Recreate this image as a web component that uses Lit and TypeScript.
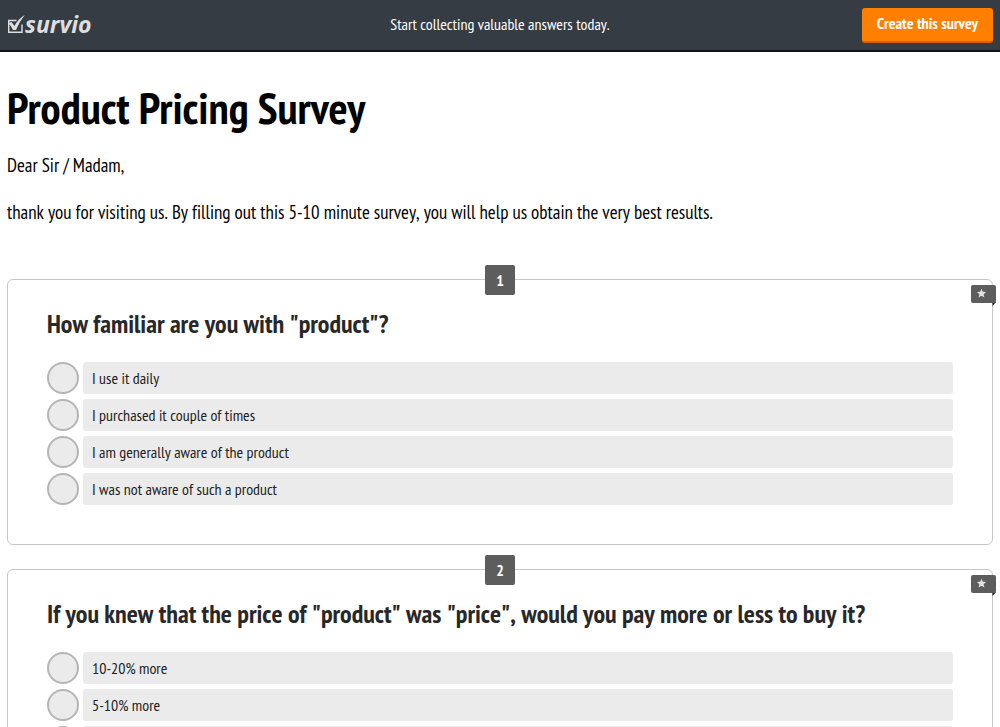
import { LitElement, html, css } from "lit";
import { customElement, property } from "lit/decorators.js";

const questions = [
  {
    title: 'How familiar are you with "product"?',
    answers: [
      "I use it daily",
      "I purchased it couple of times",
      "I am generally aware of the product",
      "I was not aware of such a product",
    ],
  },
  {
    title: 'If you knew that the price of "product" was "price", would you pay more or less to buy it?',
    answers: ["10-20% more", "5-10% more", ""],
  },
];

@customElement("survey-question")
export class SurveyQuestion extends LitElement {
  @property({ type: Number }) number = 1;
  @property() heading = "";
  @property({ attribute: false }) answers: string[] = [];

  static styles = css`
    :host {
      display: block;
    }
    .card {
      position: relative;
      border: 1px solid #c6c6c6;
      border-radius: 6px;
      padding: 27px 39px 39px;
    }
    .number {
      position: absolute;
      top: -15px;
      left: 50%;
      width: 30px;
      margin-left: -15px;
      border-radius: 2px;
      background: #5d5d5d;
      color: #fff;
      font-size: 16px;
      font-weight: 700;
      line-height: 30px;
      text-align: center;
    }
    .flag {
      position: absolute;
      top: 4px;
      right: -4px;
      width: 26px;
      height: 23px;
    }
    h2 {
      margin: 0 0 21px;
      color: #282828;
      font-size: 26px;
      font-weight: 700;
      line-height: 34px;
    }
    .answers {
      display: grid;
      gap: 5px;
    }
    .answer {
      display: flex;
      align-items: center;
      gap: 4px;
    }
    input {
      appearance: none;
      flex: none;
      box-sizing: border-box;
      width: 32px;
      height: 32px;
      margin: 0;
      border: 2px solid #b5b5b5;
      border-radius: 50%;
      background: #ebebeb;
    }
    input:checked {
      background: radial-gradient(#5d5d5d 0 7px, #ebebeb 8px);
    }
    .text {
      flex: 1;
      min-height: 32px;
      padding: 0 9px;
      border-radius: 3px;
      background: #ebebeb;
      color: #222;
      font-size: 16px;
      line-height: 32px;
    }
  `;

  render() {
    return html`
      <section class="card">
        <div class="number">${this.number}</div>
        <svg class="flag" viewBox="0 0 26 23" aria-hidden="true">
          <path d="M21 18h5l-3.500 4v-3z" fill="#151515" />
          <rect x="1" y="1" width="25" height="18" rx="2" fill="#5d5d5d" />
          <path
            d="M11.500 4.700l1.300 3.100 3.300.3-2.500 2.200.8 3.300-2.900-1.800-2.900 1.800.8-3.300-2.500-2.200 3.300-.3z"
            fill="#e2e2e2"
          />
        </svg>
        <h2 id="title">${this.heading}</h2>
        <div class="answers" role="radiogroup" aria-labelledby="title">
          ${this.answers.map(
            (answer) => html`
              <label class="answer">
                <input type="radio" name="answer" />
                <span class="text">${answer}</span>
              </label>
            `
          )}
        </div>
      </section>
    `;
  }
}

@customElement("app-root")
export class AppRoot extends LitElement {
  static styles = css`
    :host {
      display: block;
      height: 100vh;
      overflow: hidden;
      background: #fff;
      color: #000;
      font-family: "PT Sans Narrow", "Liberation Sans Narrow", "Roboto Condensed", "Open Sans Condensed", Lato, sans-serif;
      font-kerning: none;
      font-variant-ligatures: none;
    }
    header {
      display: grid;
      grid-template-columns: 1fr auto 1fr;
      align-items: center;
      box-sizing: border-box;
      height: 52px;
      padding: 1px 7px 0;
      border-bottom: 2px solid #101418;
      background: #353c43;
      color: #fff;
    }
    .logo {
      display: flex;
      align-items: center;
      padding-bottom: 4px;
      color: #dedede;
      font-family: "Open Sans", sans-serif;
      font-size: 23px;
      font-style: italic;
      font-weight: 700;
      line-height: 28px;
      text-decoration: none;
    }
    .logo svg {
      width: 18px;
      height: 20px;
    }
    .slogan {
      padding-bottom: 4px;
      font-size: 16px;
      line-height: 24px;
    }
    button {
      justify-self: end;
      height: 35px;
      padding: 0 15px 4px;
      border: 0;
      border-bottom: 2px solid #d95f00;
      border-radius: 3px;
      background: #ff8000;
      color: #fff;
      font-family: inherit;
      font-size: 16px;
      font-weight: 700;
    }
    main {
      padding: 30px 7px 0;
    }
    h1 {
      margin: 0 0 21px;
      font-size: 45px;
      font-kerning: normal;
      line-height: 50px;
    }
    p {
      margin: 0 0 23px;
      font-size: 19px;
      line-height: 24px;
    }
    .questions {
      display: grid;
      gap: 24px;
      padding-top: 32px;
    }
  `;

  render() {
    return html`
      <header>
        <a class="logo" href="#">
          <svg viewBox="0 0 18 20" aria-hidden="true">
            <path d="M9.500 6.500H1.700V18.300h13.300V10.500" fill="none" stroke="#dedede" stroke-width="1.400" />
            <path d="M1 9l3.500-1 3 4Q11 5 17.800 1 12 8 9 16H6Q4.500 12 1 9z" fill="#dedede" />
          </svg>
          <span>survio</span>
        </a>
        <div class="slogan">Start collecting valuable answers today.</div>
        <button type="button">Create this survey</button>
      </header>
      <main>
        <h1>Product Pricing Survey</h1>
        <p>Dear Sir / Madam,</p>
        <p>
          thank you for visiting us. By filling out this 5-10 minute survey, you will help us obtain the very best
          results.
        </p>
        <div class="questions">
          ${questions.map(
            (q, i) => html`
              <survey-question .number=${i + 1} .heading=${q.title} .answers=${q.answers}></survey-question>
            `
          )}
        </div>
      </main>
    `;
  }
}
